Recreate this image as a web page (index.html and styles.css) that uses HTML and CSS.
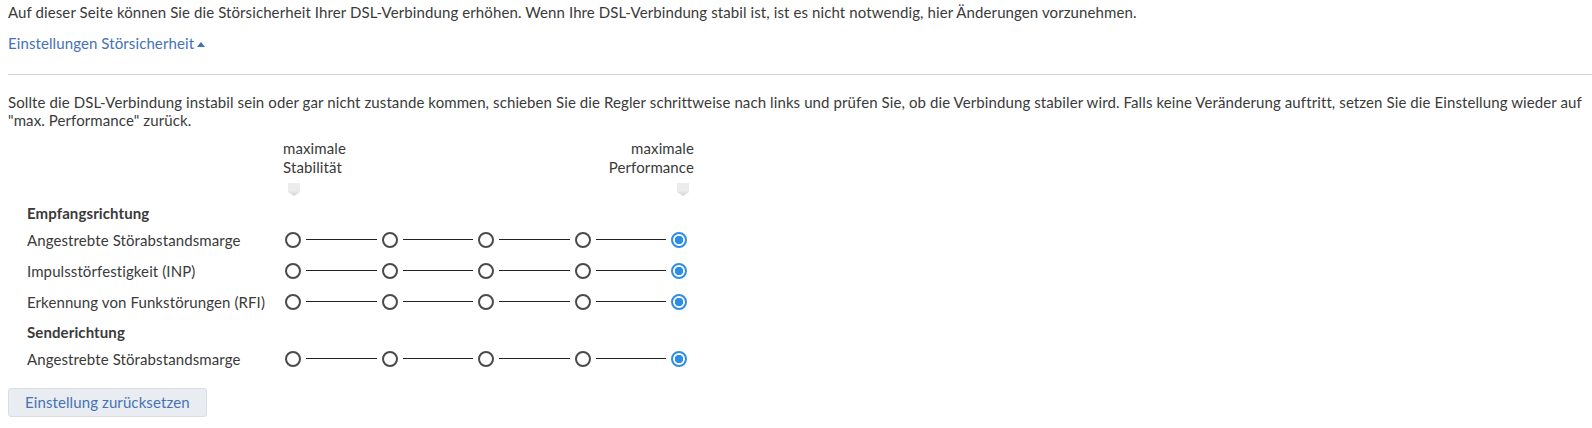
FILE: index.html
```html
<!DOCTYPE html>
<html lang="de">
<head>
<meta charset="UTF-8">
<title>Störsicherheit</title>
<link rel="stylesheet" href="styles.css">
</head>
<body>

<p class="intro">Auf dieser Seite können Sie die Störsicherheit Ihrer DSL-Verbindung erhöhen. Wenn Ihre DSL-Verbindung stabil ist, ist es nicht notwendig, hier Änderungen vorzunehmen.</p>

<a class="toggle" href="#">Einstellungen Störsicherheit<span class="arrow"></span></a>

<hr class="sep">

<p class="hint">Sollte die DSL-Verbindung instabil sein oder gar nicht zustande kommen, schieben Sie die Regler schrittweise nach links und prüfen Sie, ob die Verbindung stabiler wird. Falls keine Veränderung auftritt, setzen Sie die Einstellung wieder auf "max. Performance" zurück.</p>

<div class="sliders">
  <div class="scale-head">
    <div class="scale-labels">
      <span>maximale<br>Stabilität</span>
      <span class="right">maximale<br>Performance</span>
    </div>
    <div class="scale-marks">
      <span class="mark"></span>
      <span class="mark"></span>
    </div>
  </div>

  <div class="group">Empfangsrichtung</div>
  <div class="row">
    <span class="label">Angestrebte Störabstandsmarge</span>
    <div class="steps">
      <span class="dot"></span><span class="line"></span><span class="dot"></span><span class="line"></span><span class="dot"></span><span class="line"></span><span class="dot"></span><span class="line"></span><span class="dot on"></span>
    </div>
  </div>
  <div class="row">
    <span class="label">Impulsstörfestigkeit (INP)</span>
    <div class="steps">
      <span class="dot"></span><span class="line"></span><span class="dot"></span><span class="line"></span><span class="dot"></span><span class="line"></span><span class="dot"></span><span class="line"></span><span class="dot on"></span>
    </div>
  </div>
  <div class="row">
    <span class="label">Erkennung von Funkstörungen (RFI)</span>
    <div class="steps">
      <span class="dot"></span><span class="line"></span><span class="dot"></span><span class="line"></span><span class="dot"></span><span class="line"></span><span class="dot"></span><span class="line"></span><span class="dot on"></span>
    </div>
  </div>
  <div class="group">Senderichtung</div>
  <div class="row">
    <span class="label">Angestrebte Störabstandsmarge</span>
    <div class="steps">
      <span class="dot"></span><span class="line"></span><span class="dot"></span><span class="line"></span><span class="dot"></span><span class="line"></span><span class="dot"></span><span class="line"></span><span class="dot on"></span>
    </div>
  </div>
</div>

<button class="reset">Einstellung zurücksetzen</button>

</body>
</html>
```

FILE: styles.css
```css
body {
  font-family: Lato, "Noto Sans", sans-serif;
  font-size: 15px;
  letter-spacing: 0.1px;
  line-height: 18px;
  color: #3a3a3a;
  background-color: #fff;
  margin: 0 0 0 8px;
}
.intro {
  margin: 3px 0 0 0;
}
.toggle {
  display: inline-block;
  margin-top: 13px;
  color: #4572b4;
  text-decoration: none;
}
.arrow {
  display: inline-block;
  width: 0;
  height: 0;
  margin-left: 3px;
  border-left: 4px solid transparent;
  border-right: 4px solid transparent;
  border-bottom: 5px solid #4572b4;
  vertical-align: 2px;
}
.sep {
  border: 0;
  border-top: 1px solid #d4d4d4;
  margin: 22px 0 0 0;
}
.hint {
  margin: 18px 0 0 0;
}
.sliders {
  padding-left: 19px;
}
.scale-head {
  margin-left: 256px;
  width: 411px;
  padding-top: 10px;
  line-height: 19px;
}
.scale-labels {
  display: flex;
  justify-content: space-between;
}
.scale-labels .right {
  text-align: right;
}
.scale-marks {
  display: flex;
  justify-content: space-between;
  padding: 6px 5px 0 5px;
}
.mark {
  width: 12px;
  height: 13px;
  background: linear-gradient(#ececec 60%, #d2d2d2);
  clip-path: polygon(0 0, 100% 0, 100% 70%, 50% 100%, 0 70%);
}
.group {
  font-weight: bold;
  margin-top: 6px;
  height: 20px;
}
.scale-head + .group {
  margin-top: 8px;
}
.row {
  display: flex;
  align-items: center;
  height: 31px;
}
.label {
  width: 258px;
}
.steps {
  display: flex;
  align-items: center;
}
.dot {
  width: 16px;
  height: 16px;
  box-sizing: border-box;
  border: 2px solid #4a4a4a;
  border-radius: 50%;
  background: #fff;
}
.dot.on {
  border-color: #2e8de4;
  background: radial-gradient(circle, #2e8de4 0 4px, #fff 4.5px);
}
.line {
  width: 70.5px;
  height: 1px;
  background: #222;
  margin: 0 5px;
}
.reset {
  margin-top: 14px;
  font-family: inherit;
  font-size: 15px;
  letter-spacing: 0.1px;
  color: #4572b4;
  background-color: #e9edf2;
  border: 1px solid #d9dee5;
  border-radius: 3px;
  padding: 4px 16px 5px 16px;
}
```
